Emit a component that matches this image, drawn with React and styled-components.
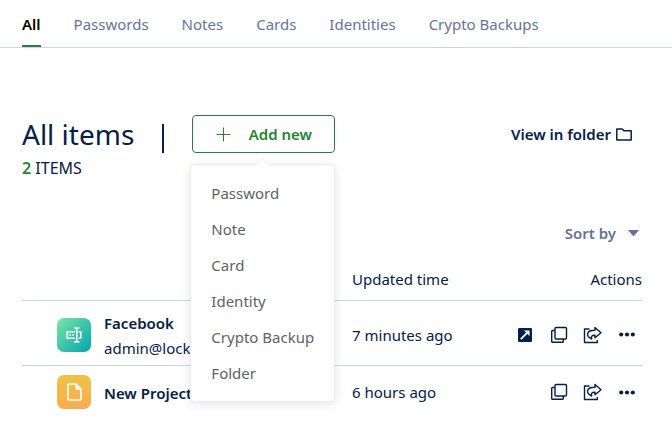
import React from "react";
import styled, { createGlobalStyle } from "styled-components";

const GlobalStyle = createGlobalStyle`
  *, *::before, *::after { box-sizing: border-box; }
  body {
    margin: 0;
    background: #fff;
    color: #042049;
    font: 15px/20px "Noto Sans", sans-serif;
  }
  button { font: inherit; color: inherit; padding: 0; border: 0; background: none; cursor: pointer; }
  a { color: inherit; text-decoration: none; }
  svg { display: block; flex: none; }
`;

const Tabs = styled.nav`
  display: flex;
  gap: 33px;
  height: 48px;
  padding: 0 22px;
  border-bottom: 1px solid #ced6e5;
`;

const Tab = styled.a`
  display: flex;
  align-items: center;
  padding-top: 3px;
  white-space: nowrap;
  border-bottom: 2px solid ${(p) => (p.$active ? "#268334" : "transparent")};
  color: ${(p) => (p.$active ? "#000" : "#64739c")};
  font-weight: ${(p) => (p.$active ? 600 : 400)};
`;

const Main = styled.main`
  padding: 67px 30px 24px 22px;
`;

const Header = styled.header`
  display: flex;
  align-items: center;
  justify-content: space-between;
`;

const TitleGroup = styled.div`
  display: flex;
  align-items: center;
`;

const Title = styled.h1`
  margin: 0;
  font-size: 28px;
  line-height: 38px;
  font-weight: 400;
`;

const Divider = styled.span`
  align-self: flex-end;
  width: 2px;
  height: 29px;
  margin: 0 28px;
  background: #042049;
`;

const MenuAnchor = styled.div`
  position: relative;
`;

const AddButton = styled.button`
  display: flex;
  align-items: center;
  justify-content: center;
  gap: 18px;
  width: 143px;
  height: 38px;
  color: #268334;
  border: 1px solid #268334;
  border-radius: 4px;
  font-weight: 600;
`;

const Menu = styled.ul`
  position: absolute;
  z-index: 1;
  top: 49px;
  right: 0;
  width: 145px;
  margin: 0;
  padding: 10px 0;
  list-style: none;
  background: #fff;
  border: 1px solid #e6ebf5;
  border-radius: 4px;
  box-shadow: 0 2px 12px rgba(0, 0, 0, 0.1);

  &::before {
    content: "";
    position: absolute;
    top: -5px;
    left: 67px;
    width: 9px;
    height: 9px;
    background: #fff;
    border: solid #ebeef5;
    border-width: 1px 0 0 1px;
    transform: rotate(45deg);
  }
`;

const MenuItem = styled.button`
  display: block;
  width: 100%;
  padding: 0 20px;
  color: #606266;
  line-height: 36px;
  text-align: left;
  white-space: nowrap;
`;

const FolderLink = styled.a`
  display: flex;
  align-items: center;
  gap: 5px;
  padding-right: 10px;
  font-weight: 600;
`;

const Count = styled.p`
  margin: 5px 0 0;
  font-size: 16px;
  line-height: 20px;

  b { color: #268334; font-weight: 600; }
`;

const SortRow = styled.div`
  display: flex;
  justify-content: flex-end;
  margin-top: 45px;
`;

const SortButton = styled.button`
  display: flex;
  align-items: center;
  gap: 12px;
  padding-right: 3px;
  color: #64739c;
  font-weight: 600;
`;

const Table = styled.table`
  width: 100%;
  margin-top: 15px;
  table-layout: fixed;
  border-collapse: collapse;
`;

const Th = styled.th`
  width: ${(p) => p.$width || "auto"};
  height: 42px;
  padding: 0;
  border-bottom: 1px solid #ced6e5;
  font-weight: 400;
  text-align: ${(p) => p.$align || "left"};
`;

const Row = styled.tr`
  height: ${(p) => (p.$tall ? "65px" : "50px")};
  &:not(:last-child) { border-bottom: 1px solid #ced6e5; }
`;

const Td = styled.td`
  padding: 4px 0 0;
  white-space: nowrap;
`;

const Item = styled.div`
  display: flex;
  align-items: center;
  gap: 13px;
  padding-left: 35px;
`;

const Tile = styled.span`
  display: grid;
  place-items: center;
  width: 34px;
  height: 34px;
  border-radius: 7px;
  background: ${(p) => p.$fill};
`;

const ItemText = styled.div`
  padding-top: 2px;
  line-height: 25px;
`;

const Name = styled.div`
  font-weight: 600;
`;

const Actions = styled.div`
  display: flex;
  align-items: center;
  justify-content: flex-end;
  gap: 14px;
  padding-right: 5px;
`;

const IconButton = styled.button`
  display: grid;
  place-items: center;
  width: 20px;
  height: 20px;
`;

const PlusIcon = () => (
  <svg width="15" height="15" viewBox="0 0 15 15" stroke="currentColor" strokeWidth="1">
    <path d="M7.5 .5v14M.5 7.5h14" />
  </svg>
);

const FolderIcon = () => (
  <svg width="16" height="13" viewBox="0 0 16 13" fill="none" stroke="currentColor" strokeWidth="1.5" strokeLinejoin="round">
    <path d="M.8.9h5.400l1.700 1.900h7.300v9.100H.8z" />
  </svg>
);

const CaretIcon = () => (
  <svg width="11" height="6" viewBox="0 0 11 6" fill="currentColor">
    <path d="M.6 0h9.8q.8 0 .3.6L6.1 5.7q-.6.5-1.2 0L.3.6Q-.2 0 .6 0z" />
  </svg>
);

const LoginIcon = () => (
  <svg width="16" height="16" viewBox="0 0 16 16" fill="none" stroke="#fff" strokeWidth="1.5">
    <path d="M9 4.7H1.2v6.6H9M12.600 4.700h2.200v6.600h-2.200M8 .8c1.800 0 2.800.6 2.800 1.600 0-1 1-1.600 2.700-1.600M8 15.200c1.800 0 2.800-.6 2.800-1.600 0 1 1 1.600 2.700 1.600M10.800 2v12" />
    <path d="M3.200 8h1.600M6.300 8h1.600" strokeWidth="1.6" />
  </svg>
);

const NoteIcon = () => (
  <svg width="15" height="18" viewBox="0 0 16 19" fill="none" stroke="#fff" strokeWidth="1.7" strokeLinejoin="round">
    <path d="M2.500 1h7L15 6.500v10q0 1.500-1.500 1.500h-11Q1 18 1 16.500v-14Q1 1 2.500 1z" />
    <path d="M9.500 1v5.500H15z" fill="#fff" strokeWidth="1" />
  </svg>
);

const OpenIcon = () => (
  <svg width="14" height="14" viewBox="0 0 14 14">
    <rect width="14" height="14" rx="1.3" fill="currentColor" />
    <path d="M2.800 11.200l7-7" stroke="#fff" strokeWidth="1.8" />
    <path d="M6 2.500h5.500V8z" fill="#fff" />
  </svg>
);

const CopyIcon = () => (
  <svg width="18" height="18" viewBox="0 0 18 18" fill="none" stroke="currentColor" strokeWidth="1.4" strokeLinejoin="round">
    <rect x="5" y="1.5" width="11.5" height="11.5" rx="1" />
    <path d="M4.800 4.500H2.500q-.8 0-.8.8v10.200q0 .8.8.8h10q.8 0 .8-.8V13" />
  </svg>
);

const ShareIcon = () => (
  <svg width="20" height="18" viewBox="0 0 20 18" fill="none" stroke="currentColor" strokeWidth="1.4" strokeLinejoin="round">
    <path d="M6.500 3H1.500v13.500h12.800V14" />
    <path d="M12 1.500l6 5.200-6 5V9.200C8.500 9.100 8 10.500 8.700 13 5.500 11.500 4 9.500 4.700 7.300 5.500 5 8.500 4.200 12 4.300z" />
  </svg>
);

const MoreIcon = () => (
  <svg width="16" height="5" viewBox="0 0 16 5" fill="currentColor">
    <circle cx="2.2" cy="2.5" r="2.1" />
    <circle cx="8" cy="2.5" r="2.1" />
    <circle cx="13.8" cy="2.5" r="2.1" />
  </svg>
);

const tabs = ["All", "Passwords", "Notes", "Cards", "Identities", "Crypto Backups"];
const kinds = ["Password", "Note", "Card", "Identity", "Crypto Backup", "Folder"];
const items = [
  {
    name: "Facebook",
    detail: "admin@locker.io",
    time: "7 minutes ago",
    icon: <LoginIcon />,
    fill: "linear-gradient(135deg, #7be5a5, #00a5b0)",
    openable: true,
  },
  {
    name: "New Project",
    time: "6 hours ago",
    icon: <NoteIcon />,
    fill: "linear-gradient(180deg, #eec345, #f9ac50)",
  },
];

export default function App() {
  return (
    <>
      <GlobalStyle />
      <Tabs>
        {tabs.map((label, i) => (
          <Tab key={label} href="#" $active={i === 0}>{label}</Tab>
        ))}
      </Tabs>
      <Main>
        <Header>
          <TitleGroup>
            <Title>All items</Title>
            <Divider />
            <MenuAnchor>
              <AddButton aria-haspopup="true" aria-expanded="true">
                <PlusIcon />
                Add new
              </AddButton>
              <Menu>
                {kinds.map((kind) => (
                  <li key={kind}><MenuItem>{kind}</MenuItem></li>
                ))}
              </Menu>
            </MenuAnchor>
          </TitleGroup>
          <FolderLink href="#">View in folder <FolderIcon /></FolderLink>
        </Header>
        <Count><b>2</b> ITEMS</Count>
        <SortRow>
          <SortButton>Sort by <CaretIcon /></SortButton>
        </SortRow>
        <Table>
          <thead>
            <tr>
              <Th aria-label="Name" />
              <Th $width="145px">Updated time</Th>
              <Th $width="145px" $align="right">Actions</Th>
            </tr>
          </thead>
          <tbody>
            {items.map((item) => (
              <Row key={item.name} $tall={Boolean(item.detail)}>
                <Td>
                  <Item>
                    <Tile $fill={item.fill}>{item.icon}</Tile>
                    <ItemText>
                      <Name>{item.name}</Name>
                      {item.detail}
                    </ItemText>
                  </Item>
                </Td>
                <Td>{item.time}</Td>
                <Td>
                  <Actions>
                    {item.openable && <IconButton aria-label="Open"><OpenIcon /></IconButton>}
                    <IconButton aria-label="Copy"><CopyIcon /></IconButton>
                    <IconButton aria-label="Share"><ShareIcon /></IconButton>
                    <IconButton aria-label="More"><MoreIcon /></IconButton>
                  </Actions>
                </Td>
              </Row>
            ))}
          </tbody>
        </Table>
      </Main>
    </>
  );
}
